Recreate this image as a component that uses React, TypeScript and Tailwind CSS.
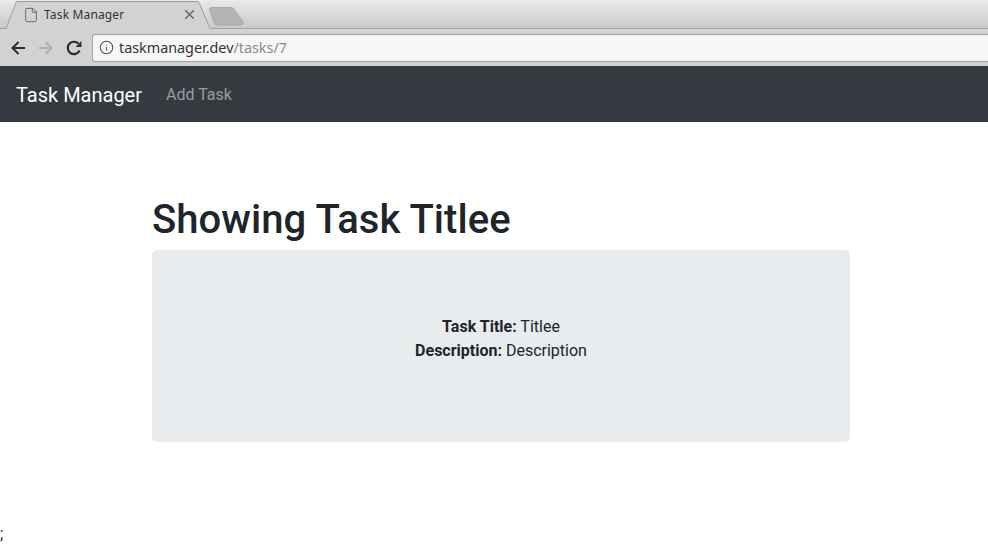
import { File, Info, X } from "lucide-react";

function TabStrip() {
  return (
    <div className="relative h-[29px] bg-gradient-to-b from-[#e8e8e8] to-[#c9c9c9] border-t border-[#ececec] border-b border-b-[#a3a3a3]">
      {/* tab outline */}
      <svg className="absolute left-0 top-0" width="250" height="29" viewBox="0 0 250 29">
        <path d="M6 28 L17 1 H198 L211 28" fill="#d2d2d2" stroke="none" />
        <path d="M0 27.5 H6 L16.5 0.5 H198.5 L210 27.5" fill="none" stroke="#9c9c9c" />
        <path d="M209.5 8.5 Q209 6.5 212 6.5 H231 Q233.5 6.5 234.5 9 L243 21 Q244 24 241 24 H218 Q215 24 214 21.5 Z" fill="#b4b4b4" stroke="#a8a8a8" />
      </svg>
      <div className="relative flex items-center h-full pl-[23px] w-[197px]">
        <File size={16} strokeWidth={1.3} className="text-[#5a5a5a] shrink-0" />
        <span className="ml-[5px] text-[12px] tracking-[0.15px] text-[#333] whitespace-nowrap font-['Noto_Sans','Open_Sans',sans-serif]">Task Manager</span>
        <X size={15} strokeWidth={2.4} className="ml-auto text-[#666]" />
      </div>
    </div>
  );
}

function Toolbar() {
  return (
    <div className="flex items-center h-[37px] bg-[#d2d2d2] pl-[11px]">
      <svg width="14" height="14" viewBox="0 0 14 14" fill="none" stroke="#2e2e2e" strokeWidth="2">
        <path d="M14 7H1.5M7.5 1 1.5 7l6 6" />
      </svg>
      <svg className="ml-[14px]" width="14" height="14" viewBox="0 0 14 14" fill="none" stroke="#aeaeae" strokeWidth="2">
        <path d="M0 7h12.5M6.5 1l6 6-6 6" />
      </svg>
      <svg className="ml-[13px]" width="16" height="16" viewBox="0 0 16 16" fill="none">
        <path d="M13.6 10.5A6.2 6.2 0 1 1 12.4 3.6" stroke="#2e2e2e" strokeWidth="2.2" />
        <path d="M15.5 1v6h-6z" fill="#2e2e2e" />
      </svg>
      <div className="ml-[10px] flex-1 h-[28px] flex items-center bg-[#f6f6f6] border border-r-0 border-[#a0a0a0] rounded-l-[3px] pl-[6px]">
        <Info size={15} strokeWidth={1.8} className="text-[#555]" />
        <span className="ml-[5px] text-[14.35px] font-['Noto_Sans','Open_Sans',sans-serif] text-[#333]">
          taskmanager.dev<span className="text-[#8a8a8a]">/tasks/7</span>
        </span>
      </div>
    </div>
  );
}

export default function App() {
  return (
    <div className="w-[988px] h-[548px] overflow-hidden bg-white font-['Roboto',sans-serif] text-[#212529]">
      <TabStrip />
      <Toolbar />

      {/* navbar */}
      <nav className="flex items-center h-[56px] bg-[#343a40] px-4 pt-[2px]">
        <span className="text-[20px] text-white">Task Manager</span>
        <span className="ml-6 text-base text-white/50">Add Task</span>
      </nav>

      <main className="ml-[152px] w-[698px] pt-[74px]">
        <h1 className="text-[40px] leading-[48px] font-medium tracking-[0.05px]">Showing Task Titlee</h1>
        <div className="mt-[6px] h-[192px] bg-[#e9ecef] rounded-[5px] flex flex-col items-center pt-[65px] text-base leading-6">
          <p><strong className="font-bold">Task Title:</strong> Titlee</p>
          <p><strong className="font-bold">Description:</strong> Description</p>
        </div>
      </main>

      <p className="mt-[80px] text-base leading-6">;</p>
    </div>
  );
}
